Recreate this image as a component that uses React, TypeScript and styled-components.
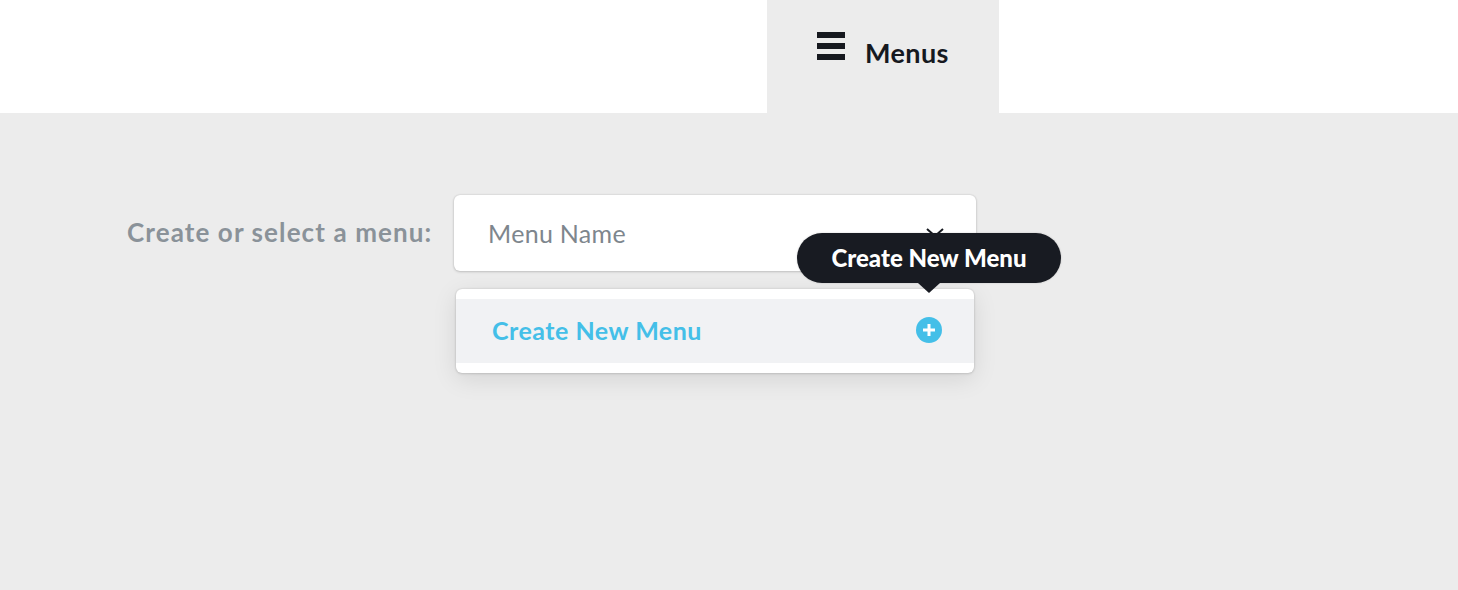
import React from 'react';
import styled, { createGlobalStyle } from 'styled-components';

const GlobalStyle = createGlobalStyle`
  html, body {
    margin: 0;
    padding: 0;
    height: 590px;
    overflow: hidden;
    background: #ececec;
    font-family: Lato, "Open Sans", sans-serif;
  }
`;

const Page = styled.div`
  width: 1458px;
  height: 590px;
  display: flex;
  flex-direction: column;
  background: #ececec;
`;

const TopBar = styled.header`
  height: 113px;
  background: #fff;
  padding-left: 767px;
  display: flex;
`;

const Tab = styled.div`
  width: 232px;
  box-sizing: border-box;
  background: #ececec;
  display: flex;
  align-items: flex-start;
  padding: 32px 0 0 50px;
  gap: 20px;
  color: #16191f;
`;

const TabLabel = styled.span`
  font-size: 27px;
  font-weight: 700;
  line-height: 41px;
  letter-spacing: 0.4px;
`;

const Content = styled.main`
  display: flex;
  align-items: flex-start;
  padding: 82px 0 0 127px;
  gap: 22px;
`;

const FieldLabel = styled.label`
  width: 305px;
  font-size: 26px;
  font-weight: 700;
  line-height: 75px;
  letter-spacing: 1.1px;
  white-space: nowrap;
  color: #8a9299;
`;

const Picker = styled.div`
  position: relative;
  width: 522px;
`;

const Field = styled.div`
  height: 76px;
  box-sizing: border-box;
  padding-left: 34px;
  display: flex;
  align-items: center;
  border-radius: 6px;
  background: #fff;
  box-shadow: 0 0 2px rgba(0, 0, 0, 0.16), 0 1px 3px rgba(0, 0, 0, 0.16);
  font-size: 25px;
  letter-spacing: 0.3px;
  color: #7e868d;
`;

const Chevron = styled.svg`
  position: absolute;
  left: 472px;
  top: 33px;
`;

const Dropdown = styled.div`
  margin: 18px 2px 0;
  padding: 10px 0;
  border-radius: 6px;
  background: #fff;
  box-shadow: 0 0 2px rgba(0, 0, 0, 0.16), 0 1px 3px rgba(0, 0, 0, 0.1), 0 6px 24px rgba(0, 0, 0, 0.1);
`;

const Option = styled.div`
  height: 64px;
  box-sizing: border-box;
  padding: 0 32px 2px 36px;
  display: flex;
  align-items: center;
  justify-content: space-between;
  background: #f1f2f4;
  font-size: 25px;
  font-weight: 700;
  letter-spacing: 0.5px;
  color: #44bfe8;
`;

const Tooltip = styled.div`
  position: absolute;
  left: 343px;
  top: 38px;
  width: 264px;
  height: 50px;
  display: flex;
  align-items: center;
  justify-content: center;
  border-radius: 25px;
  background: #181b22;
  box-shadow: 0 0 2px rgba(0, 0, 0, 0.2);
  font-size: 24px;
  font-weight: 900;
  line-height: 48px;
  color: #fff;

  &::after {
    content: '';
    position: absolute;
    left: 121px;
    top: 50px;
    border-style: solid;
    border-width: 10px 11px 0;
    border-color: #181b22 transparent transparent;
  }
`;

export default function App() {
  return (
    <Page>
      <GlobalStyle />
      <TopBar>
        <Tab>
          <svg width="28" height="28" viewBox="0 0 28 28" fill="#16191f">
            <rect x="0" y="0" width="28" height="6" />
            <rect x="0" y="11" width="28" height="6" />
            <rect x="0" y="22" width="28" height="6" />
          </svg>
          <TabLabel>Menus</TabLabel>
        </Tab>
      </TopBar>
      <Content>
        <FieldLabel>Create or select a menu:</FieldLabel>
        <Picker>
          <Field>Menu Name</Field>
          <Chevron width="18" height="10" viewBox="0 0 18 10" fill="none" stroke="#16191f" strokeWidth="2">
            <path d="M1 1l8 7 8-7" />
          </Chevron>
          <Dropdown>
            <Option>
              Create New Menu
              <svg width="26" height="26" viewBox="0 0 26 26">
                <circle cx="13" cy="13" r="13" fill="#44bfe8" />
                <path d="M13 7v12M7 13h12" stroke="#fff" strokeWidth="3" />
              </svg>
            </Option>
          </Dropdown>
          <Tooltip>Create New Menu</Tooltip>
        </Picker>
      </Content>
    </Page>
  );
}
